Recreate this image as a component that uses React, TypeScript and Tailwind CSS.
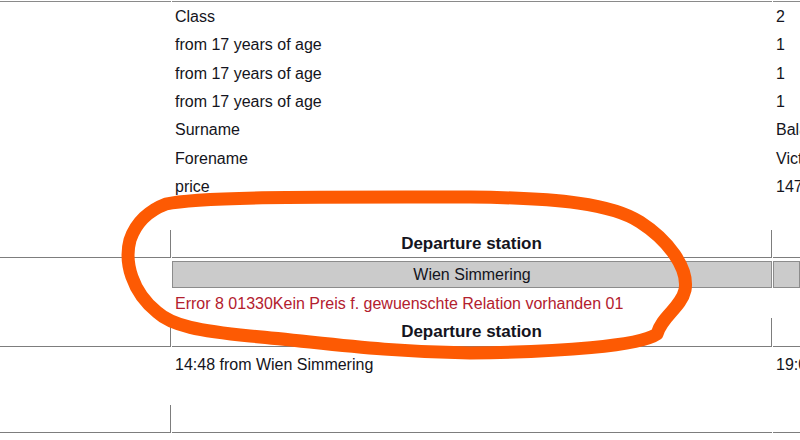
import React from 'react';

const infoRows = [
  { label: 'Class', value: '2' },
  { label: 'from 17 years of age', value: '1' },
  { label: 'from 17 years of age', value: '1' },
  { label: 'from 17 years of age', value: '1' },
  { label: 'Surname', value: 'Balázs' },
  { label: 'Forename', value: 'Victor' },
  { label: 'price', value: '147,00' },
];

const grid = 'grid grid-cols-[171px_600px_1fr] gap-x-[1px]';

function HeaderRow({ h }: { h: string }) {
  return (
    <div className={`${grid} ${h}`}>
      <div className="border-r border-b border-[#7d7d7d]" />
      <div className="flex items-center justify-center border-r border-b border-[#7d7d7d] text-[17px] font-bold">
        Departure station
      </div>
      <div className="border-b border-[#7d7d7d]" />
    </div>
  );
}

export default function App() {
  return (
    <div
      className="relative w-[800px] h-[440px] overflow-hidden bg-white text-[16px] text-[#141420]"
      style={{ fontFamily: '"Liberation Sans", Arial, sans-serif' }}
    >
      {/* top border of the cut-off row */}
      <div className={`${grid} h-[2px]`}>
        <div className="border-b border-[#8a8a8a]" />
        <div className="border-b border-[#8a8a8a]" />
        <div className="border-b border-[#8a8a8a]" />
      </div>

      <div className="pt-[1px]">
        {infoRows.map((row, i) => (
          <div key={i} className={`${grid} h-[28.3px] items-center`}>
            <div />
            <div className="pl-[3px] whitespace-nowrap">{row.label}</div>
            <div className="pl-[3px] whitespace-nowrap overflow-hidden">{row.value}</div>
          </div>
        ))}
      </div>

      <div className="h-[29px]" />

      <HeaderRow h="h-[28px]" />

      <div className={`${grid} h-[31px] pt-[3px]`}>
        <div />
        <div className="flex items-center justify-center bg-[#cbcbcb] border border-[#8c8c8c] h-[27px]">
          Wien Simmering
        </div>
        <div className="bg-[#cbcbcb] border border-[#8c8c8c] h-[27px]" />
      </div>

      <div className={`${grid} h-[29px] items-center pt-[1px]`}>
        <div />
        <div className="pl-[3px] text-[#b3202e] whitespace-nowrap">
          Error 8 01330Kein Preis f. gewuenschte Relation vorhanden 01
        </div>
        <div />
      </div>

      <HeaderRow h="h-[29px]" />

      <div className={`${grid} h-[31px] items-start pt-[6px]`}>
        <div />
        <div className="pl-[3px] whitespace-nowrap">14:48 from Wien Simmering</div>
        <div className="pl-[3px] whitespace-nowrap overflow-hidden">19:05</div>
      </div>

      <div className="h-[27px]" />

      <div className={`${grid} h-[28px]`}>
        <div className="border-r border-b border-[#7d7d7d]" />
        <div className="border-b border-[#7d7d7d]" />
        <div className="border-b border-[#7d7d7d]" />
      </div>

      {/* hand-drawn orange marker loop */}
      <svg className="absolute inset-0 pointer-events-none" width="800" height="440" viewBox="0 0 800 440">
        <path
          d="M 166 204 C 200 196, 330 197, 470 197 C 560 198, 612 204, 640 222 C 668 240, 689 268, 685 290 C 681 308, 662 316, 657 334 C 640 346, 560 352, 470 353 C 380 352, 320 342, 250 336 C 200 331, 172 326, 157 312 C 132 292, 124 262, 130 240 C 136 222, 150 210, 166 204 Z"
          fill="none"
          stroke="#fd5a03"
          strokeWidth={13}
          strokeLinejoin="round"
        />
      </svg>
    </div>
  );
}
